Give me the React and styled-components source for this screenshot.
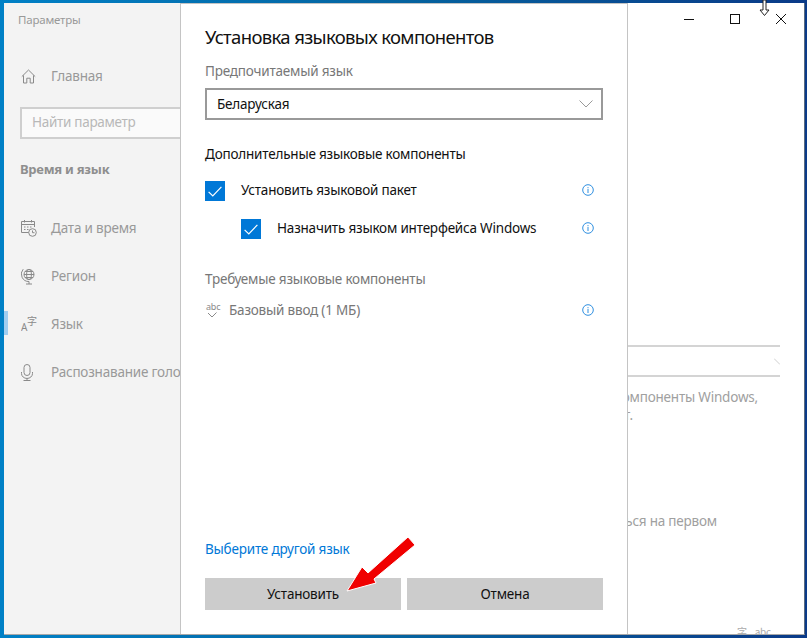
import React from 'react';
import styled, { createGlobalStyle } from 'styled-components';

const GlobalStyle = createGlobalStyle`
    html, body {
        margin: 0;
        padding: 0;
    }
    body {
        font-family: "Noto Sans", "Open Sans", sans-serif;
        letter-spacing: -0.2px;
    }
`;

const menuItems = [
    { label: 'Дата и время', icon: <CalendarIcon /> },
    { label: 'Регион', icon: <GlobeIcon /> },
    { label: 'Язык', icon: <LanguageIcon />, active: true },
    { label: 'Распознавание голоса', icon: <MicIcon /> },
];

function HomeIcon() {
    return (
        <svg width="15" height="15" viewBox="0 0 15 15" fill="none" stroke="#8a8a8a" strokeWidth="1">
            <path d="M0.8 7.6 L7.5 1 L14.2 7.6 M2.5 6.4 V14 H5.8 V9.2 H9.2 V14 H12.5 V6.4" />
        </svg>
    );
}

function CalendarIcon() {
    return (
        <svg width="16" height="17" viewBox="0 0 16 17" fill="none" stroke="#8a8a8a" strokeWidth="1">
            <path d="M8 12.5 H0.5 V1.5 H13.5 V7 M0.5 4.5 H13.5 M3.5 0 V2.5 M10.5 0 V2.5" />
            <path d="M3 7 H4.5 M6 7 H7.5 M9 7 H10.5 M3 9.5 H4.5 M6 9.5 H7.5" />
            <circle cx="11.5" cy="12.5" r="3.8" fill="#f3f3f3" />
            <path d="M11.5 10.5 V12.7 H13.5" />
        </svg>
    );
}

function GlobeIcon() {
    return (
        <svg width="15" height="17" viewBox="0 0 15 17" fill="none" stroke="#8a8a8a" strokeWidth="1">
            <circle cx="8" cy="6.5" r="5" />
            <ellipse cx="8" cy="6.5" rx="2.4" ry="5" />
            <path d="M3 6.5 H13 M4 3.5 H12 M4 9.5 H12" />
            <path d="M2.2 1.2 A7.4 7.4 0 0 0 8 13.5 M8 13.5 V16 M5 16 H11" />
        </svg>
    );
}

function LanguageIcon() {
    return (
        <svg width="16" height="16" viewBox="0 0 16 16">
            <LangGlyph x="0" y="15" size="10">A</LangGlyph>
            <LangGlyph x="6" y="9" size="10">字</LangGlyph>
        </svg>
    );
}

function MicIcon() {
    return (
        <svg width="12" height="17" viewBox="0 0 12 17" fill="none" stroke="#8a8a8a" strokeWidth="1">
            <rect x="3" y="0.5" width="6" height="11" rx="3" />
            <path d="M0.5 8 V9.5 A5 4.5 0 0 0 11.5 9.5 V8 M6 14 V16.5 M2.5 16.5 H9.5" />
        </svg>
    );
}

function InfoIcon() {
    return (
        <InfoSvg width="12" height="12" viewBox="0 0 12 12" fill="none" stroke="#2f8fe0" strokeWidth="1">
            <circle cx="6" cy="6" r="5.3" />
            <path d="M6 4.8 V9 M6 3 V3.9" />
        </InfoSvg>
    );
}

function CheckMark() {
    return (
        <svg width="14" height="11" viewBox="0 0 14 11" fill="none" stroke="#fff" strokeWidth="1.2">
            <path d="M0.6 5.8 L4.8 10 L13.4 0.8" />
        </svg>
    );
}

function Chevron() {
    return (
        <svg width="14" height="8" viewBox="0 0 14 8" fill="none" stroke="#9a9a9a" strokeWidth="1">
            <path d="M0.5 0.5 L7 7 L13.5 0.5" />
        </svg>
    );
}

function AbcIcon() {
    return (
        <svg width="16" height="16" viewBox="0 0 16 16">
            <LangGlyph x="1" y="8" size="9">abc</LangGlyph>
            <path d="M3 11 L7 15 L11.5 10.5" fill="none" stroke="#8a8a8a" strokeWidth="1" />
        </svg>
    );
}

const App = () => (
    <Desktop>
        <GlobalStyle />
        <Window>
            <Sidebar>
                <AppTitle>Параметры</AppTitle>
                <HomeRow>
                    <IconSlot><HomeIcon /></IconSlot>
                    <MenuLabel>Главная</MenuLabel>
                </HomeRow>
                <SearchBox>Найти параметр</SearchBox>
                <SectionTitle>Время и язык</SectionTitle>
                <Menu>
                    {menuItems.map((item) => (
                        <MenuItem key={item.label} $active={item.active}>
                            <IconSlot>{item.icon}</IconSlot>
                            <MenuLabel>{item.label}</MenuLabel>
                        </MenuItem>
                    ))}
                </Menu>
            </Sidebar>

            <Dialog>
                <DialogTitle>Установка языковых компонентов</DialogTitle>
                <FieldLabel>Предпочитаемый язык</FieldLabel>
                <Select>
                    <span>Беларуская</span>
                    <Chevron />
                </Select>
                <GroupTitle>Дополнительные языковые компоненты</GroupTitle>
                <CheckRow>
                    <CheckBox><CheckMark /></CheckBox>
                    <RowText>Установить языковой пакет</RowText>
                    <InfoIcon />
                </CheckRow>
                <CheckRow $nested>
                    <CheckBox><CheckMark /></CheckBox>
                    <RowText>Назначить языком интерфейса Windows</RowText>
                    <InfoIcon />
                </CheckRow>
                <RequiredTitle>Требуемые языковые компоненты</RequiredTitle>
                <RequiredRow>
                    <AbcIcon />
                    <RequiredText>Базовый ввод (1 МБ)</RequiredText>
                    <InfoIcon />
                </RequiredRow>
                <OtherLink>Выберите другой язык</OtherLink>
                <Buttons>
                    <Button>Установить</Button>
                    <Button>Отмена</Button>
                </Buttons>
            </Dialog>

            <Backdrop>
                <TitleBar>
                    <WinButton>
                        <svg width="10" height="10" viewBox="0 0 10 10" stroke="#111" strokeWidth="1">
                            <path d="M0 5.5 H10" />
                        </svg>
                    </WinButton>
                    <WinButton>
                        <svg width="10" height="10" viewBox="0 0 10 10" fill="none" stroke="#111" strokeWidth="1">
                            <rect x="0.5" y="0.5" width="9" height="9" />
                        </svg>
                    </WinButton>
                    <WinButton>
                        <svg width="10" height="10" viewBox="0 0 10 10" stroke="#111" strokeWidth="1">
                            <path d="M0 0 L10 10 M10 0 L0 10" />
                        </svg>
                    </WinButton>
                </TitleBar>
                <FadedField>
                    <svg width="6" height="7" viewBox="0 0 6 7" fill="none" stroke="#cfcfcf" strokeWidth="1">
                        <path d="M0 0.5 L6 6.5" />
                    </svg>
                </FadedField>
                <FadedLine $top={11} $right={46}>компоненты Windows,</FadedLine>
                <FadedLine $top={0} $right={171}>т.</FadedLine>
                <FadedLine $top={88} $right={87}>установиться на первом</FadedLine>
                <FadedIcons>
                    <FadedGlyph>字</FadedGlyph>
                    <FadedGlyph>abc</FadedGlyph>
                </FadedIcons>
            </Backdrop>
        </Window>

        <RedArrow viewBox="0 0 72 60" width="72" height="60">
            <path
                d="M2 56 L17 32 L23 38 L63 2 L70 10 L29 44 L31 48 Z"
                fill="#f00000"
                stroke="#fff"
                strokeWidth="1"
            />
        </RedArrow>
        <Cursor viewBox="0 0 11 17" width="11" height="17">
            <path d="M4 0 H7 V10 H10 L5.5 15.5 L1 10 H4 Z" fill="#fff" stroke="#222" strokeWidth="1" />
        </Cursor>
    </Desktop>
);

const LangGlyph = styled.text.attrs((p) => ({ fontSize: p.size }))`
    fill: #8a8a8a;
    font-family: "Noto Sans", "Noto Sans CJK SC", sans-serif;
`;

const Desktop = styled.div`
    position: relative;
    width: 807px;
    height: 638px;
    overflow: hidden;
    box-sizing: border-box;
    padding: 3px 2px 3px 4px;
    background: linear-gradient(90deg, #0080c6 0%, #05639f 50%, #0a3a88 100%);
`;

const Window = styled.div`
    display: flex;
    height: 632px;
    background: #fff;
    border-right: 1px solid #5a6a80;
    border-bottom: 1px solid #a8a8a8;
    box-sizing: border-box;
    overflow: hidden;
`;

const Sidebar = styled.div`
    width: 176px;
    flex-shrink: 0;
    background: #f3f3f3;
    overflow: hidden;
    font-size: 13.5px;
    color: #999;
`;

const AppTitle = styled.div`
    font-size: 11.5px;
    line-height: 16px;
    margin: 9px 0 0 14px;
`;

const HomeRow = styled.div`
    display: flex;
    align-items: center;
    height: 20px;
    margin-top: 38px;
`;

const IconSlot = styled.div`
    width: 47px;
    padding-left: 17px;
    box-sizing: border-box;
    display: flex;
    align-items: center;
    flex-shrink: 0;
`;

const MenuLabel = styled.span`
    white-space: nowrap;
`;

const SearchBox = styled.div`
    margin: 21px -4px 0 16px;
    height: 32px;
    box-sizing: border-box;
    border: 2px solid #cfcfcf;
    background: #fafafa;
    padding-left: 10px;
    line-height: 27px;
    letter-spacing: -0.3px;
    color: #b8b8b8;
`;

const SectionTitle = styled.div`
    margin: 20px 0 0 16px;
    font-weight: 700;
    font-size: 13px;
    line-height: 20px;
    letter-spacing: -0.25px;
    color: #8e8e8e;
`;

const Menu = styled.div`
    margin-top: 25px;
`;

const MenuItem = styled.div`
    display: flex;
    align-items: center;
    height: 48px;
    position: relative;
    &::before {
        content: "";
        display: ${(p) => (p.$active ? 'block' : 'none')};
        position: absolute;
        left: 0;
        top: 11px;
        width: 4px;
        height: 24px;
        background: #a0cdf0;
    }
`;

const Dialog = styled.div`
    width: 448px;
    flex-shrink: 0;
    box-sizing: border-box;
    display: flex;
    flex-direction: column;
    padding: 19px 24px 24px;
    background: #fff;
    border: 1px solid #c4c4c4;
    border-bottom: none;
    font-size: 13.5px;
    color: #111;
`;

const DialogTitle = styled.div`
    font-size: 18.5px;
    line-height: 28px;
    letter-spacing: -0.65px;
    color: #111;
    white-space: nowrap;
`;

const FieldLabel = styled.div`
    margin-top: 10px;
    line-height: 20px;
    color: #777;
`;

const Select = styled.div`
    margin-top: 7px;
    height: 32px;
    box-sizing: border-box;
    border: 2px solid #999;
    padding: 0 8px 0 10px;
    display: flex;
    align-items: center;
    justify-content: space-between;
`;

const GroupTitle = styled.div`
    margin-top: 24px;
    line-height: 20px;
`;

const CheckRow = styled.div`
    display: flex;
    align-items: flex-start;
    height: 21px;
    line-height: 20px;
    margin-top: ${(p) => (p.$nested ? '17px' : '16px')};
    padding-left: ${(p) => (p.$nested ? '36px' : '0')};
    padding-right: 9px;
`;

const CheckBox = styled.div`
    width: 20px;
    height: 20px;
    flex-shrink: 0;
    background: #0078d7;
    display: flex;
    align-items: center;
    justify-content: center;
    margin: 1px 16px 0 0;
`;

const RowText = styled.span`
    flex: 1;
    white-space: nowrap;
`;

const InfoSvg = styled.svg`
    flex-shrink: 0;
    align-self: flex-start;
    margin-top: 4px;
`;

const RequiredTitle = styled.div`
    margin-top: 30px;
    line-height: 20px;
    color: #777;
`;

const RequiredRow = styled.div`
    display: flex;
    align-items: center;
    height: 20px;
    margin-top: 11px;
    padding-right: 9px;
`;

const RequiredText = styled.span`
    flex: 1;
    margin-left: 8px;
    color: #777;
`;

const OtherLink = styled.div`
    margin-top: auto;
    line-height: 20px;
    color: #0078d7;
`;

const Buttons = styled.div`
    display: grid;
    grid-template-columns: 196px 196px;
    gap: 6px;
    margin-top: 19px;
`;

const Button = styled.div`
    height: 32px;
    background: #ccc;
    display: flex;
    align-items: center;
    justify-content: center;
    color: #111;
`;

const Backdrop = styled.div`
    flex: 1;
    min-width: 0;
    display: flex;
    flex-direction: column;
    overflow: hidden;
    font-size: 13.5px;
    color: #a0a0a0;
`;

const TitleBar = styled.div`
    display: flex;
    justify-content: flex-end;
    height: 32px;
    flex-shrink: 0;
`;

const WinButton = styled.div`
    width: 46px;
    display: flex;
    align-items: center;
    justify-content: center;
`;

const FadedField = styled.div`
    margin: 310px 24px 0 0;
    height: 32px;
    box-sizing: border-box;
    border-top: 2px solid #d4d4d4;
    border-bottom: 2px solid #d4d4d4;
    display: flex;
    justify-content: flex-end;
    padding-top: 11px;
`;

const FadedLine = styled.div`
    display: flex;
    justify-content: flex-end;
    white-space: nowrap;
    line-height: 18px;
    margin-top: ${(p) => p.$top}px;
    padding-right: ${(p) => p.$right}px;
`;

const FadedIcons = styled.div`
    margin-top: auto;
    margin-bottom: -4px;
    padding-right: 33px;
    display: flex;
    justify-content: flex-end;
    gap: 8px;
    font-size: 10px;
    line-height: 12px;
    color: #aaa;
    font-family: "Noto Sans CJK SC", "Noto Sans", sans-serif;
`;

const FadedGlyph = styled.span``;

const RedArrow = styled.svg`
    position: absolute;
    left: 345px;
    top: 535px;
`;

const Cursor = styled.svg`
    position: absolute;
    left: 759px;
    top: 0;
`;

export default App;
